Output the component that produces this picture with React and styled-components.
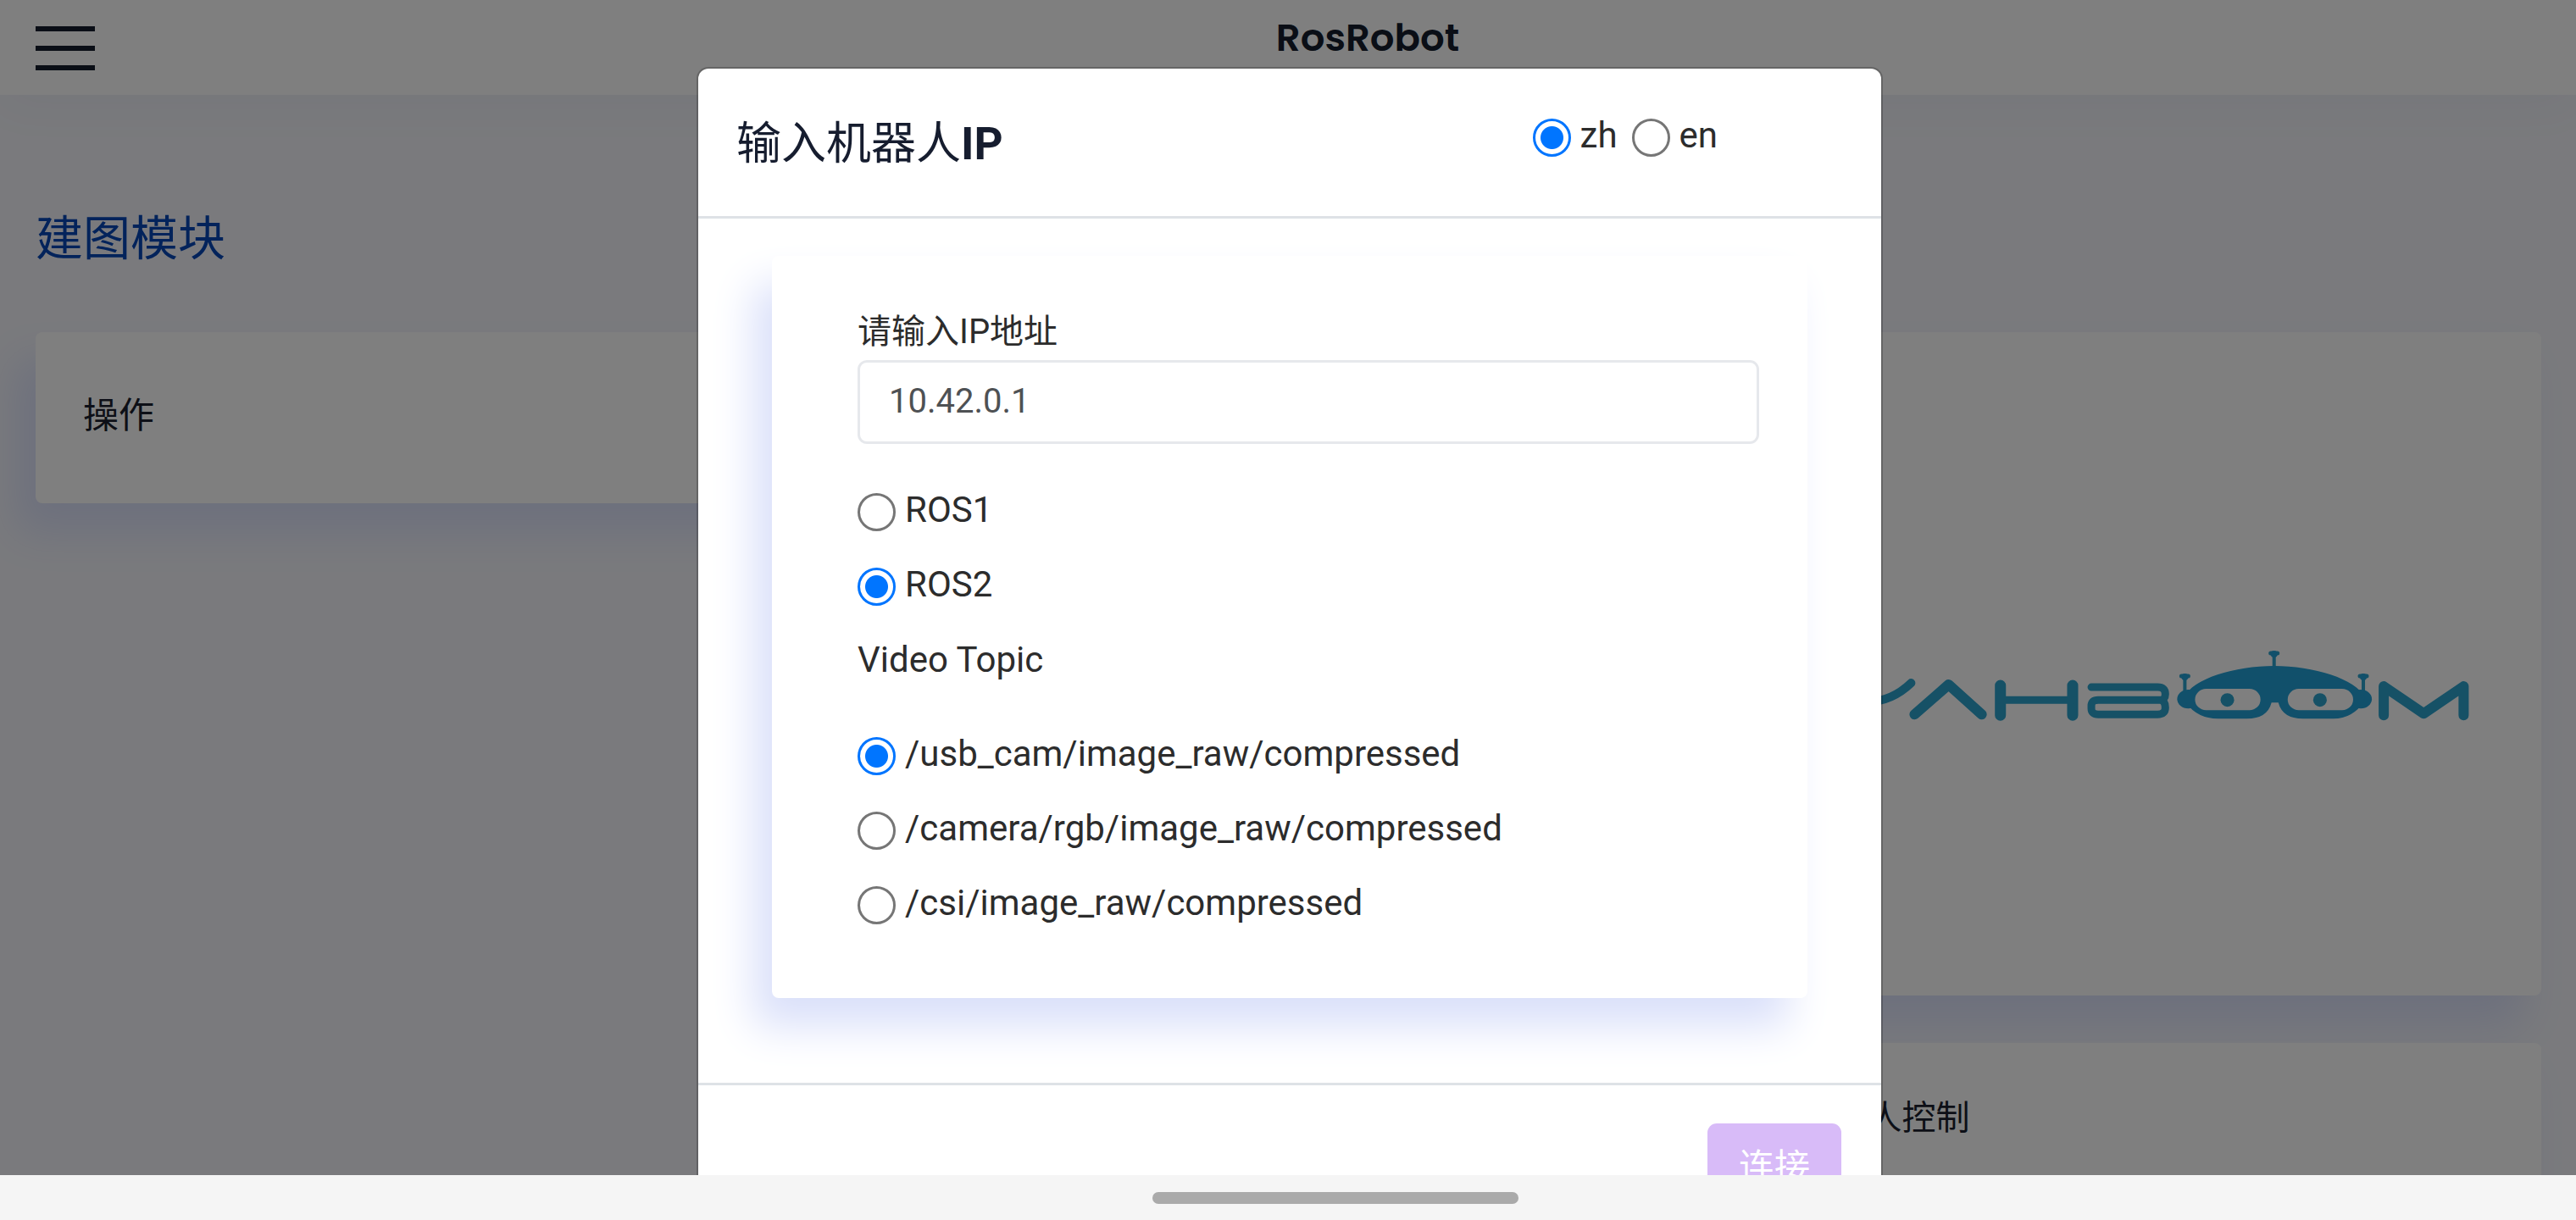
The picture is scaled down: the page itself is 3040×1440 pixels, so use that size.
import React, { useState } from "react";
import styled, { createGlobalStyle } from "styled-components";

const GlobalStyle = createGlobalStyle`
  *, *::before, *::after { box-sizing: border-box; }
  body {
    margin: 0;
    font-family: Roboto, "Noto Sans CJK SC", sans-serif;
    font-size: 42px;
    line-height: 60px;
    color: #2c2c2c;
  }
`;

const Device = styled.div`
  display: flex;
  flex-direction: column;
  height: 100vh;
  overflow: hidden;
`;

const Screen = styled.div`
  position: relative;
  flex: 1;
  min-height: 0;
  overflow: hidden;
  background: #f4f5fa;
`;

const GestureBar = styled.div`
  display: flex;
  align-items: center;
  justify-content: center;
  height: 53px;
  padding-left: 112px;
  background: #f5f5f5;
`;

const Handle = styled.div`
  width: 432px;
  height: 14px;
  border-radius: 7px;
  background: #aaaaaa;
`;

const TopBar = styled.header`
  display: flex;
  align-items: flex-start;
  height: 112px;
  padding-left: 42px;
  background: #fff;
  box-shadow: 0 8px 60px rgba(60, 80, 160, 0.05);
`;

const MenuButton = styled.button`
  display: flex;
  flex-direction: column;
  gap: 17px;
  width: 70px;
  margin: 31px 76px 0 0;
  padding: 0;
  border: 0;
  background: none;
`;

const MenuLine = styled.span`
  height: 6px;
  background: #141c2c;
`;

const Brand = styled.h1`
  flex: 1;
  margin: 0;
  padding-top: 15px;
  text-align: center;
  font: 600 45px/60px Poppins, Inter, sans-serif;
  color: #141c2c;
`;

const Content = styled.main`
  padding: 134px 41px 0 42px;
`;

const ModuleTitle = styled.h2`
  margin: 0 0 74px;
  font-size: 56px;
  font-weight: 400;
  line-height: 72px;
  color: #0647b7;
`;

const Columns = styled.div`
  display: grid;
  grid-template-columns: minmax(0, 36fr) minmax(0, 17fr);
  gap: 56px;
  align-items: start;
`;

const Column = styled.div`
  display: grid;
  gap: 56px;
`;

const Card = styled.section`
  border-radius: 8px;
  background: #fff;
  box-shadow: -22px 34px 50px #dae0fa;
`;

const PanelCard = styled(Card)`
  padding: ${(p) => (p.$tall ? "66px 56px 70px" : "56px")};
`;

const CardTitle = styled.h3`
  margin: 0;
  font-size: ${(p) => (p.$small ? "40px" : "42px")};
  font-weight: 400;
  line-height: 66px;
  color: #1b1f2e;
`;

const Logo = styled.svg`
  display: block;
  width: 100%;
`;

const Backdrop = styled.div`
  position: absolute;
  inset: 0;
  padding: 79px 0 0 4px;
  background: rgba(0, 0, 0, 0.5);
`;

const Dialog = styled.div`
  max-width: 1400px;
  margin: 0 auto;
  border: 2px solid rgba(0, 0, 0, 0.2);
  border-radius: 14px;
  background: #fff;
  background-clip: padding-box;
`;

const DialogHeader = styled.div`
  display: flex;
  justify-content: space-between;
  padding: 49px 193px 45px 45px;
  border-bottom: 3px solid #dee2e6;
`;

const DialogTitle = styled.h2`
  margin: 0;
  font-size: 53px;
  font-weight: 400;
  line-height: 80px;
  color: #161d2f;
`;

const Languages = styled.div`
  display: flex;
  align-items: flex-start;
  gap: 17px;
`;

const DialogBody = styled.div`
  padding: 44px 87px 100px;
`;

const FormCard = styled(Card)`
  padding: 60px 57px 82px 101px;
`;

const FieldLabel = styled.label`
  display: block;
  margin-bottom: 3px;
  font-size: 40px;
`;

const AddressInput = styled.input`
  display: block;
  width: 100%;
  height: 99px;
  margin-bottom: 48px;
  padding: 0 34px 3px;
  border: 3px solid #e6e8ec;
  border-radius: 11px;
  background: #fff;
  font: inherit;
  font-size: 40px;
  color: #4e5154;
`;

const Options = styled.div`
  display: grid;
  gap: 28px;
`;

const GroupTitle = styled.div`
  margin: 29px 0 51px;
`;

const OptionLabel = styled.label`
  display: flex;
  align-items: center;
  gap: 11px;
`;

const Radio = styled.input`
  appearance: none;
  width: 45px;
  height: 45px;
  margin: 4px 0 0;
  border: 3px solid #767676;
  border-radius: 50%;
  background: #fff;

  &:checked {
    border-color: #0075ff;
    background: radial-gradient(circle closest-side, #0075ff 13px, #fff 14px);
  }
`;

const DialogFooter = styled.div`
  display: flex;
  justify-content: flex-end;
  padding: 45px 47px;
  border-top: 3px solid #dee2e6;
`;

const ConnectButton = styled.button`
  padding: 22px 37px;
  border: 0;
  border-radius: 11px;
  background: #d8bbf8;
  font: inherit;
  color: #fff;
`;

function Option({ name, text, checked, onSelect }) {
  return (
    <OptionLabel>
      <Radio type="radio" name={name} checked={checked} onChange={onSelect} />
      {text}
    </OptionLabel>
  );
}

const TOPICS = [
  "/usb_cam/image_raw/compressed",
  "/camera/rgb/image_raw/compressed",
  "/csi/image_raw/compressed",
];

function YahboomLogo() {
  return (
    <Logo viewBox="0 0 816 669" role="img" aria-label="Yahboom">
      <g fill="none" stroke="#2ca2cc" strokeWidth="10" strokeLinecap="round" strokeLinejoin="round">
        <path d="M28 358Q50 379 80 379Q108 379 131 357M80 379V396" />
        <path d="M135 394L175 359L214 394" strokeWidth="12" />
        <path d="M236 360V395M321 360V395" strokeWidth="13" />
        <path d="M236 377H321" strokeWidth="9" />
        <path
          d="M343 362H421Q430 362 430 370Q430 377 424 377H351Q343 377 343 384V387Q343 394 351 394H421Q430 394 430 386Q430 378 424 377"
          strokeWidth="9"
        />
        <path d="M687 395V361L734 393L781 361V395" strokeWidth="12" />
        <path d="M558 324V340M453 351V368M663 351V368" strokeWidth="4" />
        <path d="M554 322H562M449 349H457M659 349H667" strokeWidth="5" />
      </g>
      <g fill="#22a0d6">
        <circle cx="558" cy="323" r="4" />
        <circle cx="453" cy="350" r="4" />
        <circle cx="663" cy="350" r="4" />
        <ellipse cx="457" cy="376" rx="13" ry="11" />
        <ellipse cx="660" cy="376" rx="13" ry="11" />
        <path d="M452 374C462 352 512 337 558 337S654 352 665 374L664 379Q650 399 628 399H592Q568 399 563 380H555Q550 399 526 399H492Q468 399 454 380Z" />
      </g>
      <g fill="#fff">
        <rect x="465" y="364" width="77" height="25" rx="13" />
        <rect x="574" y="364" width="77" height="25" rx="13" />
      </g>
      <g fill="#2ca2cc">
        <ellipse cx="503" cy="377" rx="8" ry="8" />
        <ellipse cx="612" cy="377" rx="8" ry="8" />
      </g>
    </Logo>
  );
}

export default function App() {
  const [lang, setLang] = useState("zh");
  const [ros, setRos] = useState("ROS2");
  const [topic, setTopic] = useState(TOPICS[0]);
  const [ip, setIp] = useState("10.42.0.1");

  return (
    <Device>
      <GlobalStyle />
      <Screen>
        <TopBar>
          <MenuButton type="button" aria-label="Menu">
            <MenuLine />
            <MenuLine />
            <MenuLine />
          </MenuButton>
          <Brand>RosRobot</Brand>
        </TopBar>
        <Content>
          <ModuleTitle>建图模块</ModuleTitle>
          <Columns>
            <PanelCard $tall>
              <CardTitle>操作</CardTitle>
            </PanelCard>
            <Column>
              <PanelCard>
                <YahboomLogo />
              </PanelCard>
              <PanelCard>
                <CardTitle $small>机器人控制</CardTitle>
              </PanelCard>
            </Column>
          </Columns>
        </Content>
        <Backdrop>
          <Dialog role="dialog" aria-labelledby="dialog-title">
            <DialogHeader>
              <DialogTitle id="dialog-title">
                输入机器人<b>IP</b>
              </DialogTitle>
              <Languages>
                {["zh", "en"].map((code) => (
                  <Option
                    key={code}
                    name="lang"
                    text={code}
                    checked={lang === code}
                    onSelect={() => setLang(code)}
                  />
                ))}
              </Languages>
            </DialogHeader>
            <DialogBody>
              <FormCard as="form">
                <FieldLabel htmlFor="ip">请输入IP地址</FieldLabel>
                <AddressInput id="ip" value={ip} onChange={(e) => setIp(e.target.value)} />
                <Options>
                  {["ROS1", "ROS2"].map((v) => (
                    <Option key={v} name="ros" text={v} checked={ros === v} onSelect={() => setRos(v)} />
                  ))}
                </Options>
                <GroupTitle>Video Topic</GroupTitle>
                <Options>
                  {TOPICS.map((v) => (
                    <Option key={v} name="topic" text={v} checked={topic === v} onSelect={() => setTopic(v)} />
                  ))}
                </Options>
              </FormCard>
            </DialogBody>
            <DialogFooter>
              <ConnectButton type="button">连接</ConnectButton>
            </DialogFooter>
          </Dialog>
        </Backdrop>
      </Screen>
      <GestureBar>
        <Handle />
      </GestureBar>
    </Device>
  );
}
